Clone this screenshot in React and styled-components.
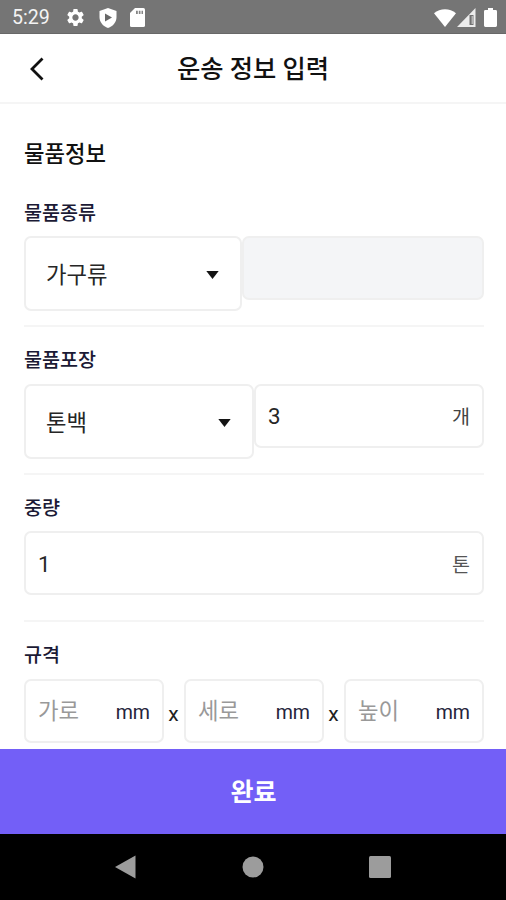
import * as React from "react";
import styled, { createGlobalStyle } from "styled-components";
import { MdSettings } from "react-icons/md";

//
// --- Styled Components ---
const GlobalStyle = createGlobalStyle`
  * {
    box-sizing: border-box;
  }

  body {
    margin: 0;
    background: #fff;
    font-family: Roboto, "Noto Sans CJK KR", sans-serif;
    color: #111;
  }
`;

const Screen = styled.div`
  display: flex;
  flex-direction: column;
  height: 900px;
  overflow: hidden;
`;

const StatusBar = styled.div`
  display: flex;
  flex: none;
  align-items: center;
  justify-content: space-between;
  height: 34px;
  padding: 2px 9px 0 12px;
  background: #757575;
  border-bottom: 1px solid #686868;
  color: #fff;
`;

const StatusGroup = styled.div`
  display: flex;
  align-items: center;

  svg {
    display: block;
  }
`;

const StatusIcons = styled(StatusGroup)`
  gap: 13px;
`;

const Clock = styled.span`
  width: 53px;
  font-size: 19.6px;
  line-height: 31px;
  color: #f3f3f3;
`;

const Header = styled.header`
  display: grid;
  flex: none;
  grid-template-columns: 60px 1fr 60px;
  align-items: center;
  height: 70px;
  border-bottom: 2px solid #f5f5f5;
`;

const BackButton = styled.button`
  height: 60px;
  padding: 1px 0 0 28px;
  border: 0;
  background: none;
  text-align: left;

  svg {
    display: block;
  }
`;

const Title = styled.h1`
  margin: 0;
  padding-top: 4px;
  font-size: 25.3px;
  font-weight: 500;
  line-height: 36px;
  text-align: center;
`;

const Content = styled.main`
  flex: 1;
  min-height: 0;
  padding: 32px 22px 0 24px;
  overflow: hidden;
`;

const Heading = styled.h2`
  height: 43.6px;
  margin: 0;
  font-size: 22.3px;
  font-weight: 500;
  line-height: 36px;
`;

const Section = styled.section`
  height: 147.6px;
  padding-top: 19px;
  border-bottom: ${props => (props.last ? "0" : "2px solid #f5f5f5")};
`;

const Label = styled.h3`
  height: 37.4px;
  margin: 0;
  font-size: 19.6px;
  font-weight: 500;
  line-height: 29px;
  color: #1b1a35;
`;

const FieldRow = styled.div`
  display: flex;
  align-items: flex-start;
`;

const Field = styled.div`
  display: flex;
  flex: 1;
  align-items: center;
  min-width: 0;
  height: ${props => (props.tall ? "75px" : "64px")};
  padding: ${props => (props.tall ? "3px 21px 0 20px" : "0 12px 0 12px")};
  border: 2px solid #efefef;
  border-radius: 7px;
  background: ${props => (props.disabled ? "#f4f5f7" : "#fff")};
`;

const SelectField = styled(Field)`
  flex: 0 0 ${props => props.width};
  justify-content: space-between;
`;

const Value = styled.span`
  flex: 1;
  padding-top: 1px;
  font-size: 22.3px;
  line-height: 34px;
  color: ${props => (props.placeholder ? "#999" : "#262626")};
`;

const Unit = styled.span`
  padding-top: 5px;
  font-size: 19.6px;
  line-height: 30px;
  color: ${props => props.color || "#25243a"};
`;

const Times = styled.span`
  width: 20px;
  padding: 3px 1px 0 0;
  font-size: 21px;
  line-height: 64px;
  text-align: center;
  color: #222;
`;

const SubmitButton = styled.button`
  flex: none;
  height: 85px;
  padding: 0 0 4px 1px;
  border: 0;
  background: #735ff7;
  color: #fff;
  font-family: inherit;
  font-size: 25px;
  font-weight: 700;
`;

const NavBar = styled.nav`
  display: flex;
  flex: none;
  align-items: center;
  justify-content: space-between;
  height: 66px;
  padding: 0 115px;
  background: #000;
`;

//
// --- Icons ---
const ShieldPlay = () => (
  <svg width="18" height="20" viewBox="0 0 18 20">
    <path d="M9 0 L17.5 3 V9 C17.5 14.2 14 18.3 9 20 C4 18.3 .5 14.2 .5 9 V3 Z" fill="#fff" />
    <path d="M6 5.5 V13.5 L13 9.5 Z" fill="#686868" />
  </svg>
);

const SdCard = () => (
  <svg width="15" height="19" viewBox="0 0 15 19">
    <path d="M5 0 H13.4 Q15 0 15 1.6 V17.4 Q15 19 13.4 19 H1.6 Q0 19 0 17.4 V5 Z" fill="#fff" />
    <path d="M6 2.8 H7.8 V6 H6 Z M8.8 2.8 H10.5 V6 H8.8 Z M11.5 2.8 H13 V6 H11.5 Z" fill="#858585" />
  </svg>
);

const Wifi = () => (
  <svg width="22" height="18" viewBox="0 0 22 18">
    <path d="M0 4.2 C6.2 -1 15.8 -1 22 4.2 L11 18 Z" fill="#fff" />
  </svg>
);

const Signal = () => (
  <svg width="28" height="19" viewBox="0 0 28 19">
    <path d="M19.5 0 V19 H1 Z" fill="#ececec" />
    <path d="M13.5 7 H17.5 V17 H13.5 Z" fill="#727272" />
    <path d="M15.5 8 H17.5 V16 H15.5 Z" fill="#b5b5b5" />
  </svg>
);

const Battery = () => (
  <svg width="13" height="19" viewBox="0 0 13 19">
    <path d="M4 0 H9 V2 H11.6 Q13 2 13 3.4 V17.6 Q13 19 11.6 19 H1.4 Q0 19 0 17.6 V3.4 Q0 2 1.4 2 H4 Z" fill="#fff" />
  </svg>
);

const Chevron = () => (
  <svg width="18" height="24" viewBox="0 0 18 24">
    <path d="M14.5 1.5 L4 12 L14.5 22.5" fill="none" stroke="#111" strokeWidth="2.8" />
  </svg>
);

const Caret = () => (
  <svg width="13" height="8" viewBox="0 0 13 8">
    <path d="M.3 0 H12.7 L6.5 8 Z" fill="#141414" />
  </svg>
);

//
// --- App Component ---
const dimensions = ["가로", "세로", "높이"];

const App = () => (
  <Screen>
    <GlobalStyle />
    <StatusBar>
      <StatusGroup>
        <Clock>5:29</Clock>
        <StatusIcons>
          <MdSettings size={21} />
          <ShieldPlay />
          <SdCard />
        </StatusIcons>
      </StatusGroup>
      <StatusGroup>
        <Wifi />
        <Signal />
        <Battery />
      </StatusGroup>
    </StatusBar>
    <Header>
      <BackButton aria-label="뒤로">
        <Chevron />
      </BackButton>
      <Title>운송 정보 입력</Title>
    </Header>
    <Content>
      <Heading>물품정보</Heading>
      <Section>
        <Label>물품종류</Label>
        <FieldRow>
          <SelectField tall width="218px">
            <Value>가구류</Value>
            <Caret />
          </SelectField>
          <Field disabled />
        </FieldRow>
      </Section>
      <Section>
        <Label>물품포장</Label>
        <FieldRow>
          <SelectField tall width="230px">
            <Value>톤백</Value>
            <Caret />
          </SelectField>
          <Field>
            <Value>3</Value>
            <Unit color="#444">개</Unit>
          </Field>
        </FieldRow>
      </Section>
      <Section>
        <Label>중량</Label>
        <FieldRow>
          <Field>
            <Value>1</Value>
            <Unit color="#555">톤</Unit>
          </Field>
        </FieldRow>
      </Section>
      <Section last>
        <Label>규격</Label>
        <FieldRow>
          {dimensions.map((name, i) => (
            <React.Fragment key={name}>
              {i > 0 && <Times>x</Times>}
              <Field>
                <Value placeholder="true">{name}</Value>
                <Unit>mm</Unit>
              </Field>
            </React.Fragment>
          ))}
        </FieldRow>
      </Section>
    </Content>
    <SubmitButton>완료</SubmitButton>
    <NavBar>
      <svg width="21" height="24" viewBox="0 0 21 24">
        <path d="M0 12 L20.5 .5 V23.5 Z" fill="#9c9c9c" />
      </svg>
      <svg width="22" height="22" viewBox="0 0 22 22">
        <circle cx="11" cy="11" r="10.5" fill="#9c9c9c" />
      </svg>
      <svg width="22" height="22" viewBox="0 0 22 22">
        <rect width="22" height="22" rx="1.5" fill="#9c9c9c" />
      </svg>
    </NavBar>
  </Screen>
);

export default App;
